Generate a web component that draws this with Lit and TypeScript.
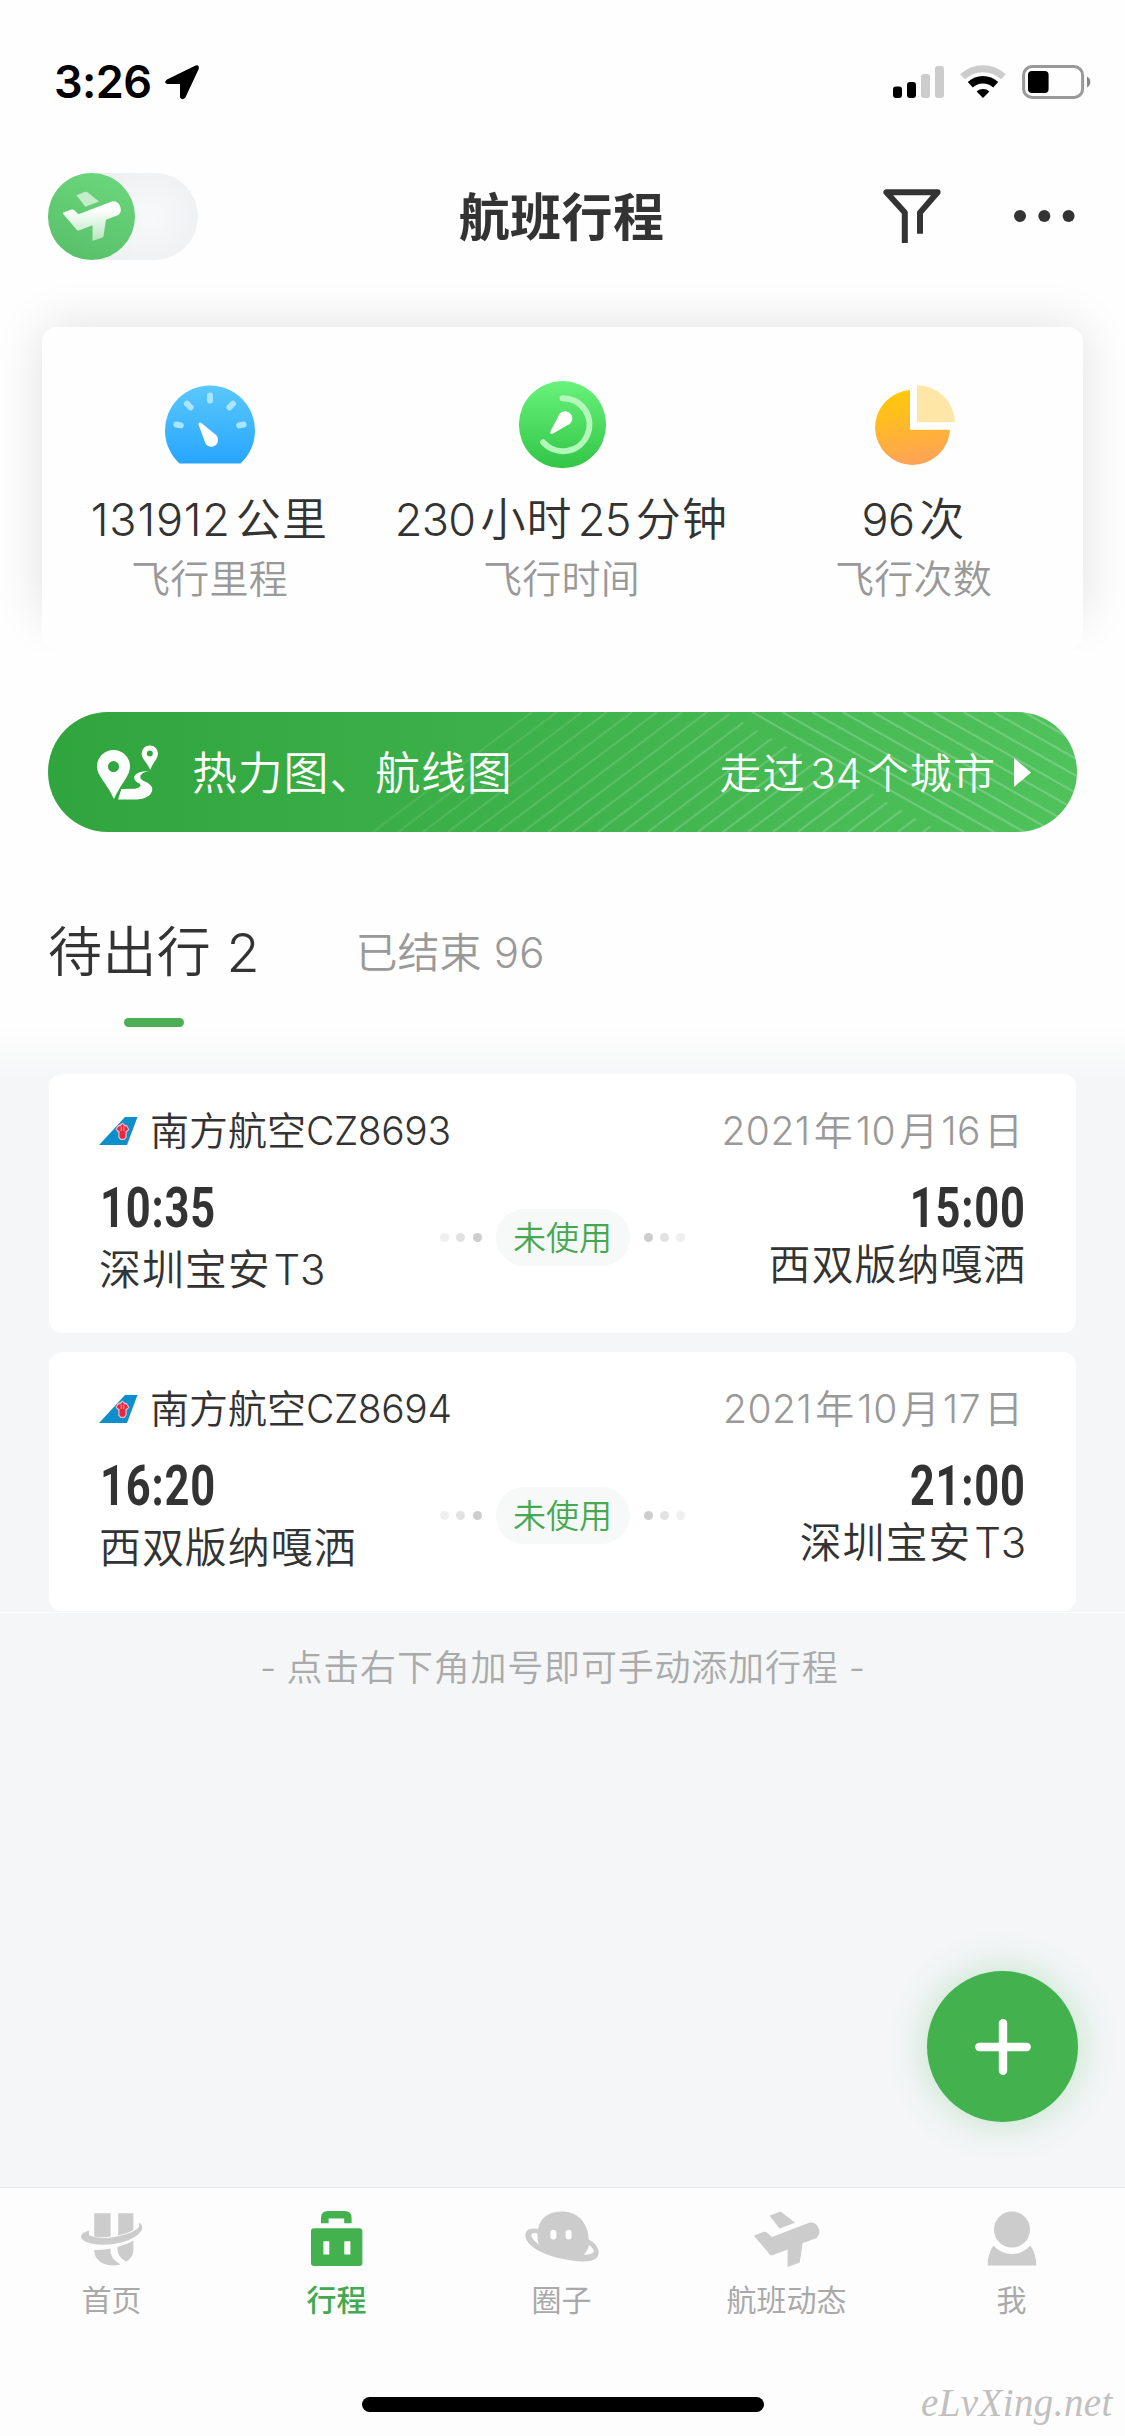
import { LitElement, html, svg, css } from "lit";
import { customElement, property } from "lit/decorators.js";

/** Splits a string into latin/number runs and Chinese runs so each can be tracked separately. */
const runs = (text: string) =>
  (text.match(/[\x20-\x7e]+|[^\x20-\x7e]+/g) ?? []).map((part) =>
    /^[\x20-\x7e]/.test(part)
      ? html`<span class="n">${part}</span>`
      : html`<span class="c">${part}</span>`
  );

const typeStyles = css`
  * {
    box-sizing: border-box;
  }
  svg {
    display: block;
    flex: none;
    overflow: visible;
  }
  .t {
    white-space: pre;
  }
  .n {
    font-weight: 360;
    letter-spacing: var(--n, 0);
  }
  .c {
    letter-spacing: var(--c, 0);
  }
`;

interface Flight {
  airline: string;
  date: string;
  depart: string;
  arrive: string;
  from: string;
  to: string;
  status: string;
}

const flights: Flight[] = [
  {
    airline: "南方航空CZ8693",
    date: "2021年10月16日",
    depart: "10:35",
    arrive: "15:00",
    from: "深圳宝安T3",
    to: "西双版纳嘎洒",
    status: "未使用",
  },
  {
    airline: "南方航空CZ8694",
    date: "2021年10月17日",
    depart: "16:20",
    arrive: "21:00",
    from: "西双版纳嘎洒",
    to: "深圳宝安T3",
    status: "未使用",
  },
];

@customElement("flight-card")
export class FlightCard extends LitElement {
  @property({ attribute: false }) flight!: Flight;

  static styles = [
    typeStyles,
    css`
      :host {
        display: block;
        height: 259px;
        padding: 37px 50px 0 50px;
        border-radius: 13px;
        background: #fff;
        color: #333;
      }
      .top {
        display: flex;
        align-items: center;
        height: 40px;
        font-size: 39px;
        line-height: 40px;
      }
      .airline {
        margin-left: 12px;
        --n: -0.4px;
      }
      .airline .n {
        font-weight: 300;
      }
      .date {
        margin-left: auto;
        margin-right: 3px;
        color: #999;
        --n: 0.5px;
      }
      .date .c {
        margin: 0 3px;
      }
      .date .c:last-child {
        margin-right: 0;
      }
      .route {
        display: grid;
        grid-template-columns: 1fr auto 1fr;
        align-items: start;
        margin-top: 32px;
      }
      .end {
        display: flex;
        flex-direction: column;
        align-items: flex-start;
        gap: 12px;
        font-size: 42px;
        line-height: 50px;
        --c: 0.9px;
        --n: -0.2px;
      }
      .end.arrival {
        align-items: flex-end;
        gap: 7px;
      }
      .end .n {
        margin-left: 3px;
      }
      .time {
        margin-left: 1px;
        font-family: Roboto, "Liberation Sans", sans-serif;
        font-weight: 700;
        font-size: 55px;
        letter-spacing: 1px;
        transform: scaleX(0.79);
        transform-origin: left center;
      }
      .arrival .time {
        transform-origin: right center;
      }
      .mid {
        display: flex;
        align-items: center;
        gap: 14px;
        margin-top: 26px;
      }
      .pill {
        width: 134px;
        height: 57px;
        border-radius: 29px;
        background: #f6f9f8;
        color: #46a951;
        font-size: 33px;
        line-height: 58px;
        text-align: center;
      }
      .dots {
        display: flex;
        gap: 7.4px;
      }
      .dots.rev {
        flex-direction: row-reverse;
      }
      .dot {
        width: 9px;
        height: 9px;
        border-radius: 50%;
        background: #efefef;
      }
      .dot.b {
        background: #e2e2e2;
      }
      .dot.a {
        background: #cdcdcd;
      }
    `,
  ];

  render() {
    const f = this.flight;
    return html`
      <div class="top">
        <svg width="39" height="28" viewBox="0 0 39 28">
          <path d="M0 28 26 0H38.5L28 28Z" fill="#0d8fcb" />
          <path
            d="M16.5 12.5 18.5 8.5 21 7.5 23.4 5.5 25.6 7.5 28.2 8.5 30.4 12.5 27.6 15.5V20.5L25.5 23H21.5L19.3 20.5V15.5Z"
            fill="#f4b9c6"
          />
          <path
            d="M17.7 12.6 19.4 9.6 21.4 9.2 23.4 7 25.4 9.2 27.4 9.6 29.2 12.6 26.4 14.2V20L25 21.8H22L20.5 20V14.2Z"
            fill="#e8263c"
          />
          <path d="M22.2 9.5V14M24.8 9.5V14" stroke="#f9c6cf" stroke-width="0.8" />
        </svg>
        <div class="t airline">${runs(f.airline)}</div>
        <div class="t date">${runs(f.date)}</div>
      </div>
      <div class="route">
        <div class="end">
          <div class="time">${f.depart}</div>
          <div class="t">${runs(f.from)}</div>
        </div>
        <div class="mid">
          <div class="dots">
            <i class="dot"></i><i class="dot b"></i><i class="dot a"></i>
          </div>
          <div class="pill">${f.status}</div>
          <div class="dots rev">
            <i class="dot"></i><i class="dot b"></i><i class="dot a"></i>
          </div>
        </div>
        <div class="end arrival">
          <div class="time">${f.arrive}</div>
          <div class="t">${runs(f.to)}</div>
        </div>
      </div>
    `;
  }
}

const gaugeIcon = svg`<svg width="90" height="88" viewBox="0 0 90 88">
  <defs><linearGradient id="g1" x1="0" y1="0" x2="0" y2="1"><stop offset="0" stop-color="#5ac8fa"/><stop offset="1" stop-color="#27a5ff"/></linearGradient></defs>
  <path d="M14.5 82.5A45 45 0 1 1 75.5 82.5Z" fill="url(#g1)"/>
  <g stroke="#a9e6fe" stroke-width="6" stroke-linecap="round">
    <path d="M45 14.5V19.5M22 22.7 25.6 26.3M68 22.7 64.4 26.3M11.4 43.5 15.8 44.4M78.6 43.5 74.2 44.4"/>
  </g>
  <path d="M34 41.9C35 41.1 36.2 41.8 37 42.5L49.8 53.1A6.8 6.8 0 1 1 39.6 60.3L33.7 44.1C33.4 43.2 33.4 42.4 34 41.9Z" fill="#fff"/>
</svg>`;

const clockIcon = svg`<svg width="87" height="88" viewBox="0 0 87 88">
  <defs><linearGradient id="g2" x1="0" y1="0" x2="0" y2="1"><stop offset="0" stop-color="#68f27b"/><stop offset="1" stop-color="#32c546"/></linearGradient></defs>
  <circle cx="44.5" cy="43.7" r="43.6" fill="url(#g2)"/>
  <path d="M44.5 17.2A26.5 26.5 0 1 1 25.1 61.2" fill="none" stroke="#b3f7bb" stroke-width="6" stroke-linecap="round"/>
  <path d="M32.7 52.5C31.9 51.9 32.3 50.7 32.7 49.7L40.1 35.7A7.2 7.2 0 1 1 49.3 44.3L35.1 52.5C34.3 52.9 33.3 53.1 32.7 52.5Z" fill="#fff"/>
</svg>`;

const pieIcon = svg`<svg width="80" height="80" viewBox="0 0 80 80">
  <defs><linearGradient id="g3" x1="0" y1="0" x2="0.15" y2="1"><stop offset="0" stop-color="#ffcb05"/><stop offset="0.4" stop-color="#ffbd20"/><stop offset="1" stop-color="#ffa455"/></linearGradient></defs>
  <path d="M36 5V44.7H76A37.5 37.5 0 1 1 36 5Z" fill="url(#g3)"/>
  <path d="M43 .3A38 38 0 0 1 81 37.3H43Z" fill="#fde6a6"/>
</svg>`;

const planeShape = (fillWing: string, fillBody: string) => svg`
  <path d="M15.5 4.8 25.2 .9Q26.8 .4 28 1.4L41 11.8 25.6 17.6Z" fill="${fillWing}"/>
  <path d="M.6 25.6Q0 24.5 1.2 24L10 20.8Q11.6 20.3 12.8 21.4L18 26 55.2 11.7A9 9 0 0 1 62.6 27L48.6 32.2 45.9 50.6Q45.7 51.7 44.6 52.1L33.6 56V38.4L18.4 44.2Q16.8 44.7 15.8 43.4Z" fill="${fillBody}"/>`;

const navIcons = {
  home: svg`<svg width="62" height="56" viewBox="0 0 62 56" fill="#ccc">
    <path d="M13.2 2.2H29.6V25.4Q21 26.8 13.2 25.6Z"/>
    <path d="M37.2 2.2H52.4V19Q46 23 37.2 24.6Z"/>
    <path d="M8 19.6V24Q14 27.6 29 26.8 47 24.4 55.4 18.6 59.4 15.4 57.6 11.2 62.8 14.2 60.6 19.2 56.6 26.4 42 31 26 35.6 10 32.6 1 30.4 0 26 .3 21.6 8 19.6Z"/>
    <path d="M13.2 39Q22 39 29.4 37.4 28.6 47.6 39.6 53.4 28 56.4 19.4 51 13.2 46.4 13.2 39Z"/>
    <path d="M36.4 36Q46 33.6 52.4 29.6V40Q51.6 47.6 45 50.4 36 46 36.4 36Z"/>
  </svg>`,
  trip: svg`<svg width="52" height="56" viewBox="0 0 52 56" fill="#43b14e">
    <path d="M10 12.2V7Q10 0 17 0H33.6Q40.6 0 40.6 7V12.2H33.2V7.6H17.6V12.2Z"/>
    <path fill-rule="evenodd" d="M3 17.3H48.4Q51.4 17.3 51.4 20.3V52Q51.4 55 48.4 55H3Q0 55 0 52V20.3Q0 17.3 3 17.3ZM12.4 30.2V43.4H18.3V30.2ZM33.3 30.2V43.4H39.4V30.2Z"/>
  </svg>`,
  circle: svg`<svg width="74" height="56" viewBox="0 0 74 56">
    <path fill-rule="evenodd" fill="#ccc" d="M13 18Q5 16.5 1.5 20 -1.5 25 3 31.5 13 43 38 48 56 52 67 49.5 75 46.5 73.5 39.5 72 33 63.8 28.5C63 12 53 .5 37.5 .5S15 8 13 18ZM12.5 22.6Q7 21 6.2 24 7 28.8 13.8 33.4 12 28 12.5 22.6ZM64.2 34Q69.2 38 68.8 40.8 67.4 43.8 59 43.8 62.6 40 64.2 34Z"/>
    <rect x="25.4" y="18.8" width="6" height="9.6" rx="3" fill="#fff"/>
    <rect x="40.6" y="18.8" width="6" height="9.6" rx="3" fill="#fff"/>
  </svg>`,
  plane: svg`<svg width="66" height="56" viewBox="0 0 66 56">${planeShape("#ccc", "#ccc")}</svg>`,
  me: svg`<svg width="50" height="56" viewBox="0 0 50 56" fill="#ccc">
    <circle cx="25" cy="18.5" r="18"/>
    <path d="M6.4 34.6A24.5 24.5 0 0 0 43.4 34.6Q49 43 49.4 54.4H.6Q.8 43 6.4 34.6Z"/>
  </svg>`,
};

const navItems = [
  { label: "首页", icon: navIcons.home, active: false },
  { label: "行程", icon: navIcons.trip, active: true },
  { label: "圈子", icon: navIcons.circle, active: false },
  { label: "航班动态", icon: navIcons.plane, active: false },
  { label: "我", icon: navIcons.me, active: false },
];

const stats = [
  { kind: "distance", icon: gaugeIcon, value: "131912公里", label: "飞行里程" },
  { kind: "duration", icon: clockIcon, value: "230小时25分钟", label: "飞行时间" },
  { kind: "count", icon: pieIcon, value: "96次", label: "飞行次数" },
];

/* Hatching of the banner: rising strokes on the left, falling strokes on the right. */
const risingLines = Array.from({ length: 24 }, (_, i) => {
  const x = 325 + i * 25;
  return svg`<path d="M${x} 120 L${x + 159} 0" stroke-opacity="${Math.min(0.18, 0.09 + i * 0.006)}"/>`;
});
const fallingLines = Array.from({ length: 12 }, (_, i) => {
  const x = 704 + i * 30.2;
  return svg`<path d="M${x} 0 L${x + 212} 120"/>`;
});

@customElement("app-root")
export class AppRoot extends LitElement {
  static styles = [
    typeStyles,
    css`
      :host {
        display: block;
        width: 1125px;
        height: 2436px;
        overflow: hidden;
        font-family: Inter, "Noto Sans CJK SC", sans-serif;
        font-weight: 350;
        color: #333;
      }
      .screen {
        position: relative;
        display: flex;
        flex-direction: column;
        height: 2436px;
        background: #f4f6f8;
      }
      .head {
        background: #fefefe;
      }
      .status {
        display: flex;
        align-items: center;
        height: 132px;
        padding: 32px 34px 0 54px;
      }
      .clock {
        width: 111px;
        font-size: 45px;
        font-weight: 600;
        line-height: 50px;
        letter-spacing: -0.6px;
        color: #000;
      }
      .signal {
        margin-left: auto;
      }
      .bar {
        display: grid;
        grid-template-columns: 1fr auto 1fr;
        align-items: center;
        height: 168px;
        padding: 0 50px 0 48px;
      }
      .toggle {
        width: 150px;
        height: 87px;
        border-radius: 44px;
        background: radial-gradient(circle at 68% 50%, #f7f8fa 5%, #eaebed 75%);
      }
      .knob {
        display: grid;
        place-items: center;
        width: 87px;
        height: 87px;
        border-radius: 50%;
        background: linear-gradient(200deg, #6cd87c, #57be68);
      }
      .title {
        padding-top: 3px;
        font-size: 51px;
        font-weight: 700;
        line-height: 60px;
        letter-spacing: 0.4px;
      }
      .tools {
        display: flex;
        justify-content: flex-end;
        align-items: center;
        gap: 73px;
      }
      .stats {
        position: relative;
        z-index: 0;
        display: grid;
        grid-template-columns: repeat(3, 352px);
        justify-content: center;
        height: 323px;
        margin: 27px 42px 0;
        padding-right: 2px;
      }
      .stats::before {
        content: "";
        position: absolute;
        z-index: -2;
        inset: 0 0 30px;
        border-radius: 15px;
        box-shadow: 0 0 50px rgba(0, 0, 0, 0.12);
      }
      .stats::after {
        content: "";
        position: absolute;
        z-index: -1;
        inset: 0;
        border-radius: 15px;
        background: #fefefe;
      }
      .stat {
        display: flex;
        flex-direction: column;
        align-items: center;
        padding-top: 53px;
      }
      .figure {
        display: grid;
        place-items: center;
        height: 90px;
      }
      .value {
        margin-top: 25px;
        font-size: 45px;
        line-height: 50px;
        --n: -0.7px;
        --c: 1.2px;
      }
      .distance .value {
        --n: 0.8px;
      }
      .value .c {
        margin: 0 5px;
      }
      .value .c:last-child {
        margin-right: 0;
      }
      .label {
        margin-top: 9px;
        font-size: 39px;
        line-height: 50px;
        letter-spacing: 0.3px;
        color: #999;
      }
      .below {
        position: relative;
        z-index: 1;
        padding: 62px 48px 0;
        background: #fefefe;
      }
      .banner {
        display: flex;
        align-items: center;
        position: relative;
        height: 120px;
        padding: 0 46px 0 49px;
        border-radius: 60px;
        overflow: hidden;
        background: linear-gradient(90deg, #30a53d, #3fb34b 50%, #50c25c);
        color: #fff;
        font-size: 45px;
        line-height: 60px;
      }
      .hatch {
        position: absolute;
        left: 0;
        top: 0;
      }
      .banner > .t,
      .banner > .pins,
      .banner > .go {
        position: relative;
      }
      .banner > .t {
        padding-top: 3px;
      }
      .maps {
        margin-left: 33px;
        --c: 0.8px;
      }
      .cities {
        margin-left: auto;
        font-size: 42px;
        --c: 1.1px;
        --n: -0.4px;
      }
      .cities .n {
        margin: 0 5px;
      }
      .go {
        margin-left: 18px;
      }
      .tabs {
        display: flex;
        align-items: flex-start;
        height: 195px;
        padding-top: 93px;
      }
      .tab {
        display: flex;
        flex-direction: column;
        align-items: center;
        gap: 37px;
        font-size: 42px;
        line-height: 56px;
        color: #999;
        --n: 0.3px;
      }
      .tab.on {
        margin-right: 96px;
        font-size: 54px;
        color: #333;
        --c: 0.4px;
        --n: 0;
      }
      .mark {
        width: 60px;
        height: 9px;
        border-radius: 5px;
        background: #4caf55;
      }
      .fade {
        height: 47px;
        background: linear-gradient(#fefefe, #f6f7f8);
      }
      .list {
        display: flex;
        flex-direction: column;
        gap: 19px;
        padding: 0 49px 1px;
        border-bottom: 1px solid #fff;
      }
      .hint {
        flex: 1;
        padding-top: 28px;
        text-align: center;
        font-size: 36px;
        line-height: 54px;
        color: #aaa;
        --c: 0.8px;
      }
      .fab {
        position: absolute;
        left: 927px;
        top: 1971px;
        display: grid;
        place-items: center;
        width: 151px;
        height: 151px;
        border-radius: 50%;
        background: #43b14e;
        box-shadow: 0 0 38px rgba(67, 177, 78, 0.3);
      }
      .nav {
        height: 249px;
        border-top: 1px solid #e6e7e8;
        background: #fdfdfd;
      }
      .items {
        display: grid;
        grid-template-columns: repeat(5, 225px);
        margin-left: -1px;
        padding-top: 23px;
      }
      .item {
        display: flex;
        flex-direction: column;
        align-items: center;
        gap: 13px;
        font-size: 30px;
        font-weight: 400;
        line-height: 40px;
        color: #a9a9a9;
      }
      .item.on {
        color: #42a94f;
        font-weight: 500;
      }
      .home-bar {
        width: 402px;
        height: 15px;
        margin: 77px auto 0;
        border-radius: 8px;
        background: #000;
      }
      .mark-text {
        position: absolute;
        left: 921px;
        top: 2381px;
        font-family: "Z003", "URW Chancery L", "Liberation Serif", serif;
        font-style: italic;
        font-weight: 400;
        font-size: 39px;
        line-height: 44px;
        letter-spacing: 0.4px;
        color: #c0c0c0;
      }
    `,
  ];

  render() {
    return html`
      <div class="screen">
        <div class="head">
          <div class="status">
            <div class="clock">3:26</div>
            <svg width="34" height="34" viewBox="0 0 34 34">
              <path
                d="M2 14.4 30.6.5Q34.6-.3 33.7 4L20.4 32.4Q17.4 36 15 32.4V19H2.4Q-2 17.4 2 14.4Z"
                fill="#000"
              />
            </svg>
            <svg class="signal" width="198" height="34" viewBox="0 0 198 34">
              <rect x="0" y="21.6" width="9" height="11.4" rx="3" />
              <rect x="14" y="17" width="9" height="16" rx="3" />
              <rect x="28" y="9" width="9" height="24" rx="3" fill="#ccc" />
              <rect x="42" y="1" width="9" height="32" rx="3" fill="#ccc" />
              <g fill="none">
                <path d="M69.6 11.8A29.6 29.6 0 0 1 110.4 11.8" stroke="#ccc" stroke-width="7" />
                <path d="M77.3 19.8A18.5 18.5 0 0 1 102.7 19.8" stroke="#000" stroke-width="7.4" />
              </g>
              <path d="M83.6 26.4A9.6 9.6 0 0 1 96.4 26.4L90 33Z" />
              <rect x="130.6" y="1.6" width="59" height="30.8" rx="8.5" fill="none" stroke="#999" stroke-width="3" />
              <rect x="135" y="6" width="20.6" height="22" rx="4" />
              <path d="M194 11.5A6.2 6.2 0 0 1 194 22.5Z" fill="#888" />
            </svg>
          </div>
          <div class="bar">
            <div class="toggle">
              <div class="knob">
                <svg width="60" height="50" viewBox="0 0 66 56">
                  <defs>
                    <linearGradient id="pb" x1="0" y1="0" x2="0" y2="1">
                      <stop offset="0.2" stop-color="#fff" />
                      <stop offset="1" stop-color="#b6e6bd" />
                    </linearGradient>
                  </defs>
                  ${planeShape("#c3ecc8", "url(#pb)")}
                </svg>
              </div>
            </div>
            <div class="title">航班行程</div>
            <div class="tools">
              <svg width="58" height="54" viewBox="0 0 58 54">
                <path
                  d="M21.8 54V23.6L3.4 3.2H54.6L37 23.6V44.8"
                  fill="none"
                  stroke="#333"
                  stroke-width="6"
                  stroke-linejoin="round"
                />
              </svg>
              <svg width="61" height="12" viewBox="0 0 61 12" fill="#333">
                <circle cx="6" cy="6" r="6" />
                <circle cx="30.3" cy="6" r="6" />
                <circle cx="54.6" cy="6" r="6" />
              </svg>
            </div>
          </div>
          <div class="stats">
            ${stats.map(
              (s) => html`<div class="stat ${s.kind}">
                <div class="figure">${s.icon}</div>
                <div class="t value">${runs(s.value)}</div>
                <div class="label">${s.label}</div>
              </div>`
            )}
          </div>
        </div>
        <div class="below">
          <div class="banner">
            <svg class="hatch" width="1029" height="120" viewBox="0 0 1029 120">
              <defs>
                <clipPath id="wedge"><path d="M0 0H677L892 120H0Z" /></clipPath>
              </defs>
              <g stroke="#fff" stroke-width="2.2" clip-path="url(#wedge)">${risingLines}</g>
              <g stroke="#fff" stroke-width="2.2" stroke-opacity="0.2">${fallingLines}</g>
            </svg>
            <svg class="pins" width="62" height="55" viewBox="0 0 62 55" fill="#fff">
              <path
                fill-rule="evenodd"
                d="M16.5 5A16.4 16.4 0 0 1 33 21.4C33 31 24 38 17 54 10 38 0 31 0 21.4A16.4 16.4 0 0 1 16.5 5ZM16.5 16A5.6 5.6 0 1 0 16.5 27.2 5.6 5.6 0 1 0 16.5 16Z"
              />
              <path
                fill-rule="evenodd"
                d="M52.8 .4A8.2 8.2 0 0 1 61 8.6C61 14 56 17 53.2 25 50 17 44.6 14 44.6 8.6A8.2 8.2 0 0 1 52.8 .4ZM52.8 5.6A3 3 0 1 0 52.8 11.6 3 3 0 1 0 52.8 5.6Z"
              />
              <path
                d="M52 26.2Q42 28 43.4 33 45 35.6 50 37.4 56.6 41 55 46.6 52 54 40 54.4L21 54.6 24.4 44 38 43.8Q46 42 42.6 38.6 36.6 36 37.2 31.4 39.6 26 52 26.2Z"
              />
            </svg>
            <div class="t maps">${runs("热力图、航线图")}</div>
            <div class="t cities">${runs("走过34个城市")}</div>
            <svg class="go" width="17" height="29" viewBox="0 0 17 29">
              <path d="M0 0 17 14.5 0 29Z" fill="#fff" />
            </svg>
          </div>
          <div class="tabs">
            <div class="tab on">
              <div class="t">${runs("待出行 2")}</div>
              <i class="mark"></i>
            </div>
            <div class="tab"><div class="t">${runs("已结束 96")}</div></div>
          </div>
        </div>
        <div class="fade"></div>
        <div class="list">
          ${flights.map((f) => html`<flight-card .flight=${f}></flight-card>`)}
        </div>
        <div class="t hint">${runs("- 点击右下角加号即可手动添加行程 -")}</div>
        <div class="nav">
          <div class="items">
            ${navItems.map(
              (n) => html`<div class="item ${n.active ? "on" : ""}">
                ${n.icon}
                <div>${n.label}</div>
              </div>`
            )}
          </div>
          <div class="home-bar"></div>
        </div>
        <div class="fab">
          <svg width="56" height="56" viewBox="0 0 56 56">
            <path d="M28 4.3V51.7M4.3 28H51.7" stroke="#fff" stroke-width="8.4" stroke-linecap="round" />
          </svg>
        </div>
        <div class="mark-text">eLvXing.net</div>
      </div>
    `;
  }
}
